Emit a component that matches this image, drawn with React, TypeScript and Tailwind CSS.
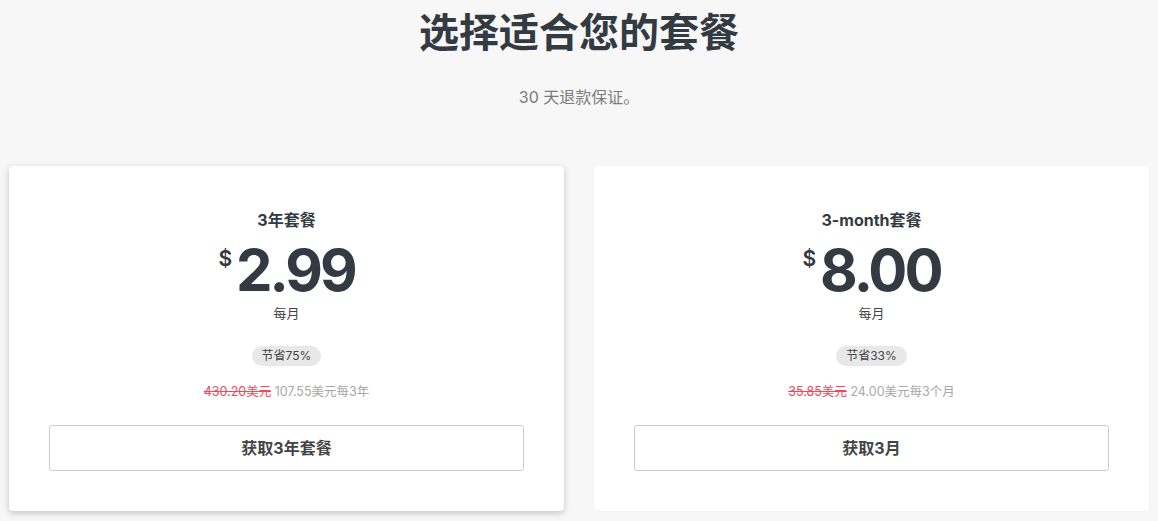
import React from 'react';

const plans = [
  {
    title: '3年套餐',
    price: '2.99',
    save: '节省75%',
    oldPrice: '430.20美元',
    total: '107.55美元每3年',
    cta: '获取3年套餐',
    selected: true,
  },
  {
    title: '3-month套餐',
    price: '8.00',
    save: '节省33%',
    oldPrice: '35.85美元',
    total: '24.00美元每3个月',
    cta: '获取3月',
    selected: false,
  },
];

const font = { fontFamily: 'Inter, "Noto Sans CJK SC", sans-serif' };

export default function App() {
  return (
    <div className="min-h-[521px] w-full bg-[#f7f7f7] text-[#333a42]" style={font}>
      <div className="mx-auto max-w-[1140px]">
        <h1 className="pt-[7px] text-center text-[40px] font-bold leading-[52px] text-[#333a42]">
          选择适合您的套餐
        </h1>
        <p className="mt-[26px] text-center text-[16px] leading-6 text-[#7b7b7b]">30 天退款保证。</p>

        <div className="mt-[57px] grid grid-cols-2 gap-[30px]">
          {plans.map((p, i) => (
            <div
              key={i}
              className={
                'flex flex-col items-center rounded-[4px] bg-white px-10 pb-10 pt-[42px] ' +
                (p.selected
                  ? 'shadow-[0_2px_6px_rgba(0,0,0,0.22)]'
                  : 'shadow-[0_0_2px_rgba(0,0,0,0.06)]')
              }
            >
              <div className="text-[16px] font-bold leading-6 text-[#333a42]">{p.title}</div>
              <div className="mt-[6px] flex items-start">
                <span className="mt-[10px] mr-[4px] text-[21px] font-semibold leading-none">$</span>
                <span className="text-[58px] font-bold leading-[64px] tracking-[-3px]">{p.price}</span>
              </div>
              <div className="mt-[1px] text-[13px] leading-5 text-[#444]">每月</div>
              <div className="mt-[23px] rounded-full bg-[#e8e8e8] px-[10px] text-[12px] leading-5 text-[#444]">
                {p.save}
              </div>
              <div className="mt-[16px] text-[12.5px] leading-5">
                <span className="text-[#f04a5a] line-through">{p.oldPrice}</span>{' '}
                <span className="text-[#a8a8a8]">{p.total}</span>
              </div>
              <button className="mt-[23px] h-[46px] w-full rounded-[3px] border border-[#cccccc] bg-white text-[16px] font-bold text-[#444]">
                {p.cta}
              </button>
            </div>
          ))}
        </div>
      </div>
    </div>
  );
}
